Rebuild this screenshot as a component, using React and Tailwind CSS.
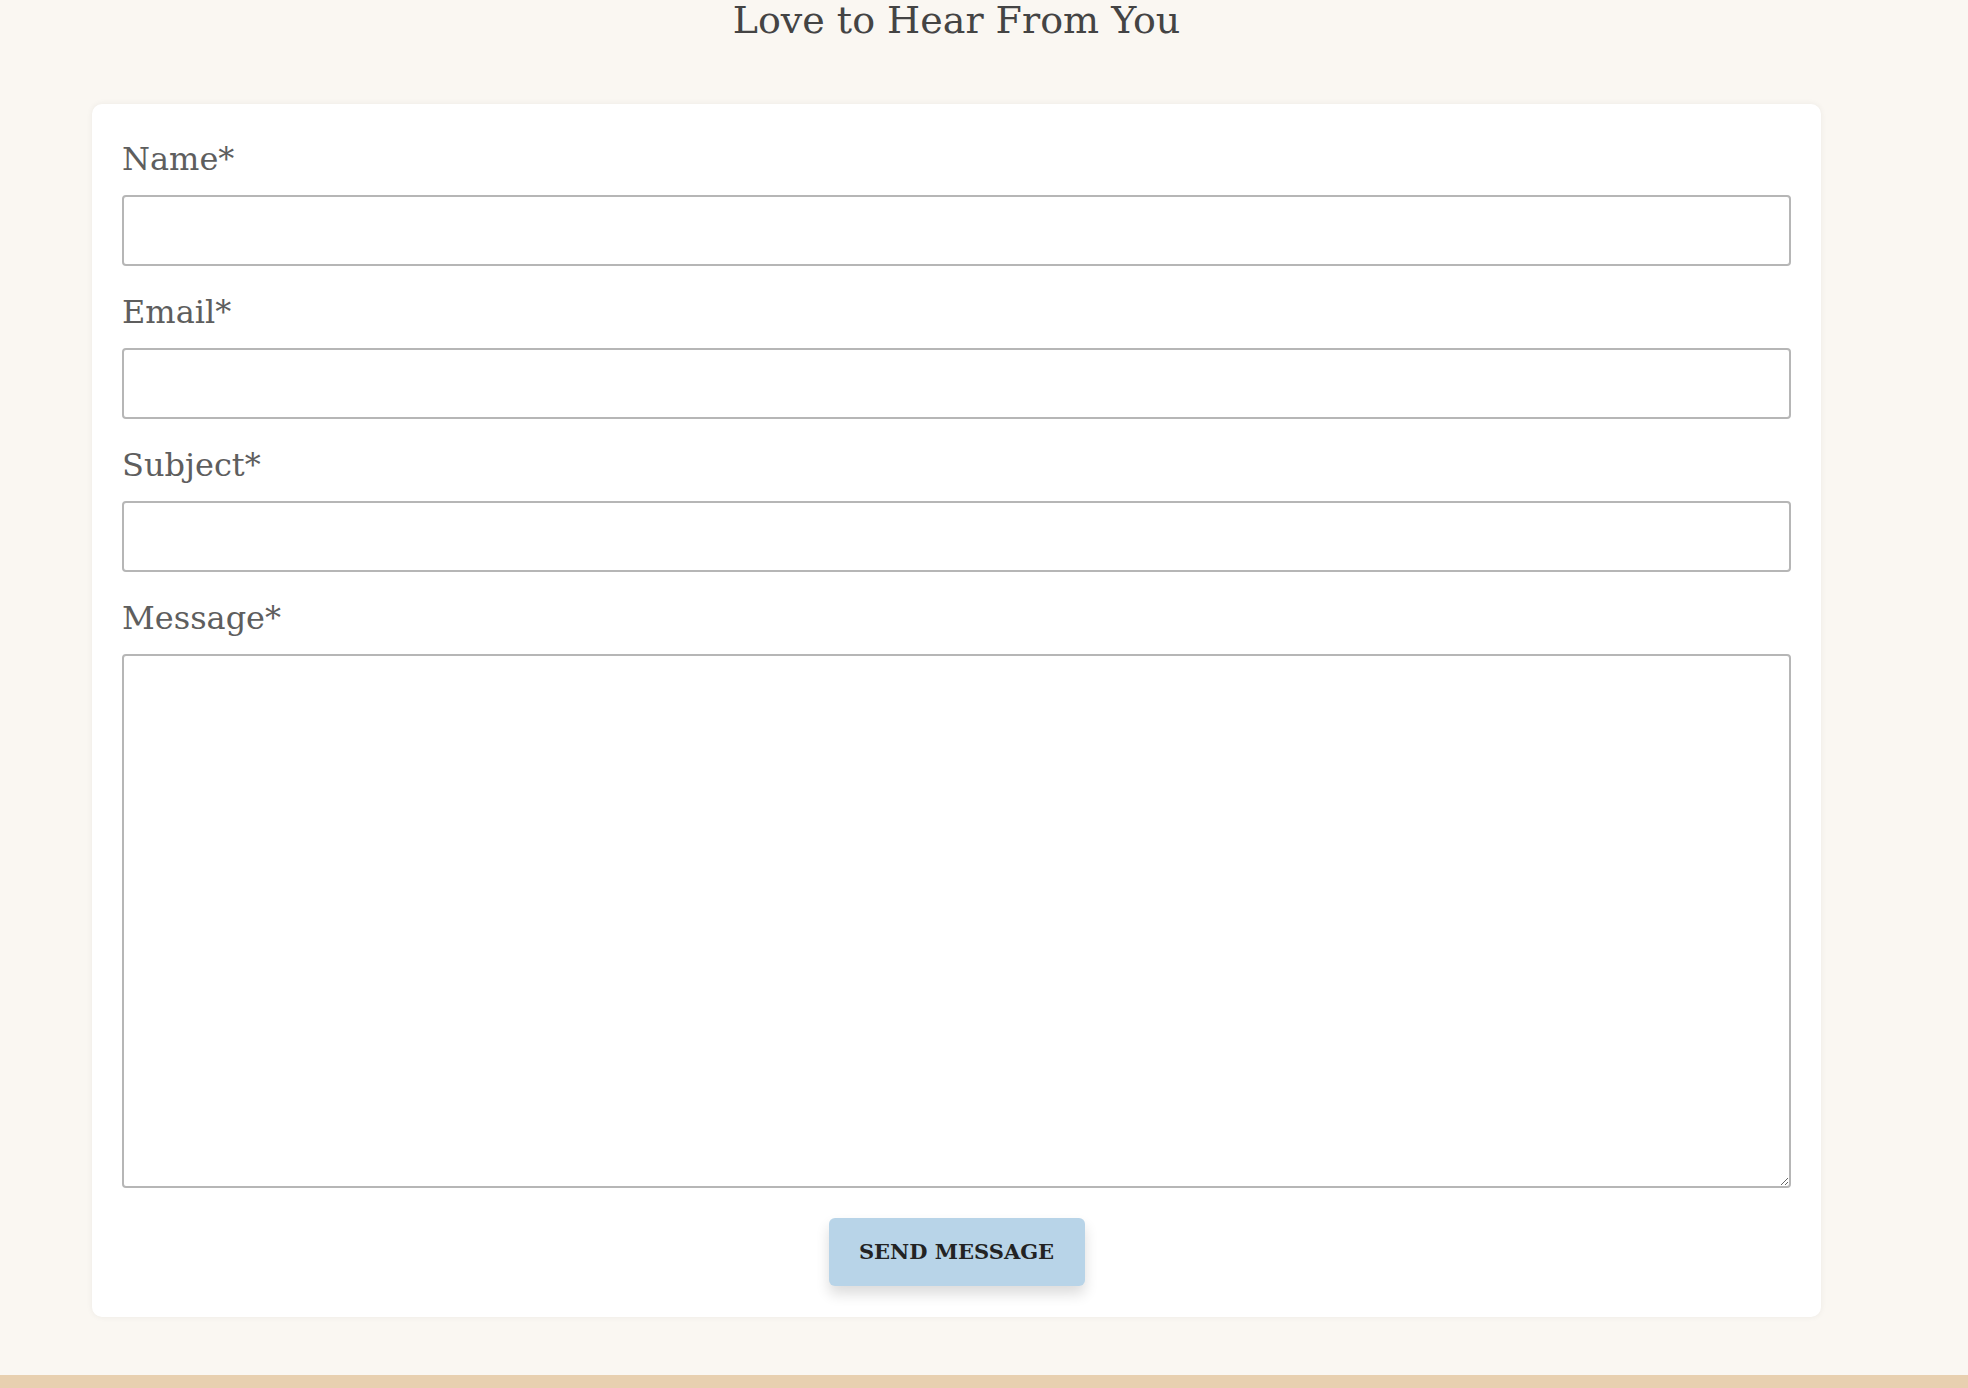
import { useState } from "react";

const serif = { fontFamily: '"DejaVu Serif", "Liberation Serif", serif' };

function Field({ label, children }) {
  return (
    <div className="mb-[30px]">
      <label className="block text-[32px] leading-none text-[#5e5e5e] mb-[20px]">
        {label}
      </label>
      {children}
    </div>
  );
}

export default function App() {
  const [form, setForm] = useState({ name: "", email: "", subject: "", message: "" });

  const update = (key) => (e) => setForm({ ...form, [key]: e.target.value });

  return (
    <div
      className="min-h-[1388px] bg-[#faf7f2] flex flex-col font-['DejaVu_Serif','Liberation_Serif',serif]"
      style={serif}
    >
      <div className="pl-[92px] flex-1">
        <div className="w-[1729px]">
          {/* HEADING */}
          <h2 className="mt-[1px] text-center text-[38px] leading-none text-[#444444]">
            Love to Hear From You
          </h2>

          {/* FORM CARD */}
          <div className="mt-[65px] bg-white rounded-[10px] shadow-[0_0_6px_rgba(0,0,0,0.06)] pt-[39px] px-[30px] pb-[31px]">
            <Field label="Name*">
              <input
                type="text"
                value={form.name}
                onChange={update("name")}
                className="block w-full h-[71px] border-2 border-[#b6b6b6] rounded-[4px] px-3 text-[22px] outline-none"
              />
            </Field>
            <Field label="Email*">
              <input
                type="email"
                value={form.email}
                onChange={update("email")}
                className="block w-full h-[71px] border-2 border-[#b6b6b6] rounded-[4px] px-3 text-[22px] outline-none"
              />
            </Field>
            <Field label="Subject*">
              <input
                type="text"
                value={form.subject}
                onChange={update("subject")}
                className="block w-full h-[71px] border-2 border-[#b6b6b6] rounded-[4px] px-3 text-[22px] outline-none"
              />
            </Field>
            <Field label="Message*">
              <textarea
                value={form.message}
                onChange={update("message")}
                className="block w-full h-[534px] border-2 border-[#b6b6b6] rounded-[4px] p-3 text-[22px] outline-none"
              />
            </Field>

            <div className="flex justify-center">
              <button className="w-[256px] h-[68px] bg-[#b8d4e8] rounded-[6px] text-[21px] font-bold text-[#232323] shadow-[0_8px_14px_rgba(0,0,0,0.14)]">
                SEND MESSAGE
              </button>
            </div>
          </div>
        </div>
      </div>

      {/* FOOTER STRIP */}
      <div className="h-[13px] bg-[#e8d0b0]"></div>
    </div>
  );
}
